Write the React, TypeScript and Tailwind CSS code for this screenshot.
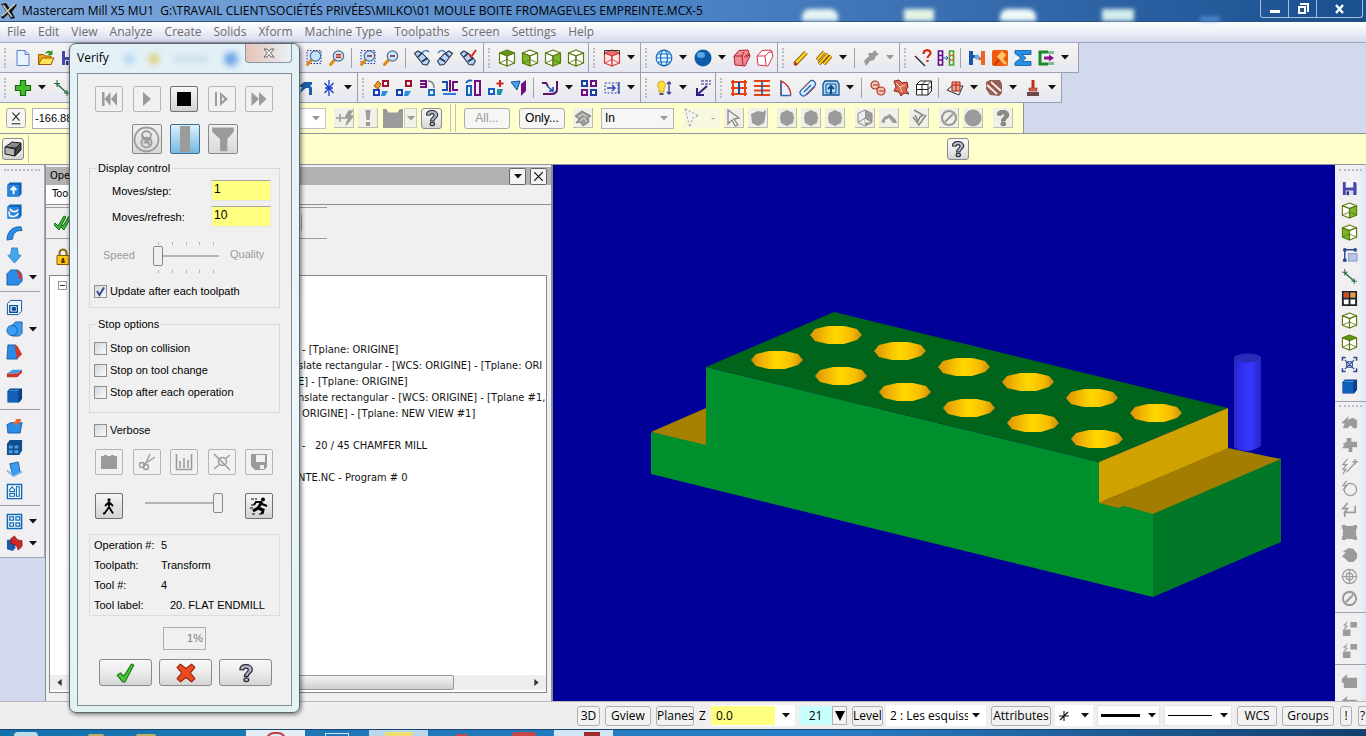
import React from "react";

type IconProps = { k: string; s?: number };

const G = "#9b9b9b";
const cube = (top: string, left: string, right: string, c: string) => (
  <g stroke={c} strokeWidth="1.2" strokeLinejoin="round">
    <path d="M9 1 16.500 4 9 7 1.500 4Z" fill={top} />
    <path d="M1.500 4 9 7V17L1.500 14Z" fill={left} />
    <path d="M16.500 4 9 7V17L16.500 14Z" fill={right} />
    <path d="M1.500 14 9 10.500 16.500 14M9 7v4" fill="none" strokeWidth=".9" />
  </g>
);
const lens = (inner: React.ReactNode, box?: boolean) => (
  <g>
    {box && <rect x="2" y="1.5" width="14" height="13" fill="#dbe8fb" stroke="#3030a0" strokeDasharray="1.5 1.5" />}
    <path d="M6.500 11 2.500 15.500" stroke="#e08a10" strokeWidth="3" strokeLinecap="round" />
    <circle cx="10.5" cy="7" r="5.2" fill="#bfe4fb" stroke="#5a6a8c" strokeWidth="1.2" />
    {inner}
  </g>
);
const blueBox = (
  <g>
    <path d="M1.500 4 4 1.500h12.500v12L14 16.500H1.500Z" fill="#0b62b8" />
    <path d="M1.500 4H14v12.500H1.500Z" fill="#2a86dc" />
  </g>
);
const rod = (a: React.ReactNode) => (
  <g>
    <path d="M1.500 4.500 5 2l5 3 6.500 7-2.500 4-4-.5Z" fill="#b9d4ee" stroke="#1f2f55" strokeWidth="1.1" strokeLinejoin="round" />
    <path d="m5 8 4-4M9 12.500 14.500 9" stroke="#1f2f55" strokeWidth="1.6" />
    {a}
  </g>
);
const q = (fill: string, stroke: string) => (
  <g>
    <path d="M3.5 6C3.500 2.800 6 1.500 9 1.500s5.700 1.700 5.700 4.500c0 3-3.700 3.300-3.700 6H7.500C7.500 8.500 11 8.500 11 6.200 11 5.200 10.200 4.600 9 4.600S7 5.200 7 6.300Z" fill={fill} stroke={stroke} strokeWidth="1.1" strokeLinejoin="round" />
    <ellipse cx="9.300" cy="15" rx="2.200" ry="1.700" fill={fill} stroke={stroke} strokeWidth="1.100" />
  </g>
);
const sq = (x: number, y: number, c: string, w = 5) => (
  <rect x={x} y={y} width={w} height={w} fill="#fff" stroke={c} strokeWidth="2" />
);

const ICONS: Record<string, React.ReactNode> = {
  doc: <path d="M3 1.500h8l4 4v11H3Zm8 0v4h4" fill="#e9f3ff" stroke="#5580c8" strokeLinejoin="round" />,
  folder: (
    <g>
      <path d="M1.500 15.500v-10h5l1.500 1.500h6v8.500Z" fill="#f2a516" stroke="#9a5c00" />
      <path d="M1.500 15.500 5 9h12l-3 6.500Z" fill="#ffe25a" stroke="#9a5c00" />
      <path d="M8 5c1-3 4-4 6-2.500l1.500-1.500v5h-5l2-1.500C11 3.500 9.500 4 8 5Z" fill="#2f9c1f" />
    </g>
  ),
  save: (
    <g>
      <path d="M2 2h13l1.500 1.500V16H2Z" fill="#4848a8" />
      <path d="M5 2h8v6H5Z" fill="#f2f4ff" />
      <path d="M5 11h8v5H5Z" fill="#d5daf5" />
      <path d="M6 12h2.500v4H6Z" fill="#30307a" />
    </g>
  ),
  zoomBox: lens(null, true),
  zoomEq: lens(<path d="M8 5.800h5M8 8.300h5" stroke="#d02a10" strokeWidth="1.600" />),
  zoomMinusBox: lens(<path d="M8 7h5" stroke="#a02040" strokeWidth="1.600" />, true),
  zoomMinus: lens(<path d="M8 7h5" stroke="#a02040" strokeWidth="1.600" />),
  rodA: rod(<path d="M9 4c2-3 5-3 7-1" stroke="#3579c8" strokeWidth="1.500" fill="none" />),
  rodB: <g transform="matrix(-1 0 0 1 18 0)">{rod(<path d="M9 3c2-2 5-2 7 1" stroke="#3579c8" strokeWidth="1.500" fill="none" />)}</g>,
  rodC: rod(<path d="m10 5 2 3 5-7" fill="none" stroke="#d02a20" strokeWidth="2" />),
  cubeTop: cube("#5f9c16", "#fff", "#fff", "#5c7a12"),
  cubeLeft: cube("#fff", "#79b82a", "#fff", "#5c7a12"),
  cubeRight: cube("#fff", "#fff", "#79b82a", "#5c7a12"),
  cubeWire: cube("#fff", "#fff", "#fff", "#5c7a12"),
  cubeRed: (
    <g>
      {cube("#f07070", "#ffe6e6", "#ffe6e6", "#d04040")}
      <path d="M1.500 1.500h15M1.500 1.500v4M16.500 1.500v4" stroke="#333" fill="none" />
    </g>
  ),
  globe: (
    <g fill="#e8f6ff" stroke="#1470c0" strokeWidth="1.200">
      <circle cx="9" cy="9" r="7.800" />
      <ellipse cx="9" cy="9" rx="3.500" ry="7.800" fill="none" />
      <path d="M1.500 9h15M3 5h12M3 13h12" />
    </g>
  ),
  sphere: (
    <g>
      <circle cx="9" cy="9" r="8.500" fill="#0f5ba8" />
      <ellipse cx="7" cy="6" rx="4" ry="3" fill="#5aa5e4" />
    </g>
  ),
  solidRed: (
    <g stroke="#b01c30" strokeLinejoin="round">
      <path d="M1 7 6 1.500l9-.5 2 6-5 10-10-1Z" fill="#f28c94" />
      <path d="M1 7h8l2-4M9 7l1 9M11 8l5-3M13 9l3-3" fill="none" />
    </g>
  ),
  wireRed: (
    <g stroke="#d8384c" fill="#fff" strokeLinejoin="round">
      <path d="M1 7 6 1.500l9-.5 2 6-5 10-10-1Z" />
      <path d="M1 7h8l4-4h4M9 7l1 9" fill="none" />
    </g>
  ),
  pencil: (
    <g>
      <path d="M3 15 14 3.500" stroke="#7a5200" strokeWidth="4.600" />
      <path d="M3.500 14.500 14 3.500" stroke="#ffd020" strokeWidth="2.600" />
      <circle cx="3.500" cy="15" r="1.800" fill="#c83020" />
    </g>
  ),
  pencils: (
    <g>
      <path d="m2 11 7-8M4 15l9-10M9 15l7-8" stroke="#7a5200" strokeWidth="3.500" />
      <path d="m2 11 7-8M4 15l9-10M9 15l7-8" stroke="#ffc81e" strokeWidth="2" />
    </g>
  ),
  grayPen: <path d="M2 12 7 7l-1-3h4l3-3 2 3 2 1-3 2-2 4-4 1-4 5Z" fill={G} />,
  lineQ: (
    <g>
      <path d="m1 7 10 10" stroke="#222" strokeWidth="1.300" />
      <path d="M9.500 5c0-5 7-5 7-1 0 2.500-3 2.500-3 5M13.500 11v2" fill="none" stroke="#d42a10" strokeWidth="2.200" />
    </g>
  ),
  tables: (
    <g>
      <path d="M1.500 2h4v14h-4Zm0 4.500h4m-4 4.500h4" fill="#fff" stroke="#60108a" strokeWidth="1.700" />
      <path d="M12.500 2h4v14h-4Z" fill="#fff" stroke="#48a030" strokeWidth="1.700" />
      <path d="M12.500 6.500h4m-4 4.500h4" stroke="#d86030" strokeWidth="1.500" />
      <path d="M6 9h5M9 7l2 2-2 2" stroke="#2060c0" fill="none" />
    </g>
  ),
  puzzle: (
    <g>
      <path d="M1 2h4v4h3v3H5v7H1Z" fill="#1a56a8" />
      <path d="M17 2h-4v6h-3v3h3v5h4Z" fill="#f06428" />
      <circle cx="9" cy="8" r="2.500" fill="#6aaee8" />
    </g>
  ),
  hammer: (
    <g>
      <rect x="1" y="1" width="16" height="16" rx="2" fill="#ee5a10" />
      <path d="M6 7.500 11 2l4 4-3 4 4 4-2 2-5-5Z" fill="#ffc468" />
      <path d="M2 16 7 10l2 1-4 5Z" fill="#c83808" />
    </g>
  ),
  sigma: <path d="M1 1.500h16v4H8l4 3.500-4 3.500h9v4H1v-3L7 9 1 4.500Z" fill="#2590e8" stroke="#0c5498" strokeWidth=".8" />,
  post: (
    <g>
      <path d="M11 3H3v12h8" fill="none" stroke="#1c8a28" strokeWidth="3" />
      <path d="M12 2v3m2-3v3m2-3v3m-4 8v3m2-3v3m2-3v3" stroke="#1c8a28" />
      <path d="M7 7.500h5V5.500L17 9l-5 3.500v-2H7Z" fill="#8a1090" />
    </g>
  ),
  plus: <path d="M6.500 1.500h5v5h5v5h-5v5h-5v-5h-5v-5h5Z" fill="#45bc30" stroke="#12700c" strokeWidth="1.200" />,
  line: (
    <g stroke="#1f6a3a" fill="none">
      <path d="m4 5 10 9" strokeWidth="1.400" />
      <path d="M4 1v7M1 4.500h6M14 11v6M11 14h6" />
    </g>
  ),
  wrench: <path d="M1 8 7 3h8v3h-2l2 3v7h-3v-7H9l-6 5 2-6Z" fill="#1a5fa8" />,
  star: <path d="M9 1v16M4.500 4l9 10M13.500 4l-9 10M5 9h8" stroke="#1f3fd0" strokeWidth="1.300" />,
  xf1: (
    <g>
      <path d="m2 7 4-5 3 3-3 5Z" fill="#f0a020" stroke="#a05010" />
      {sq(11, 2, "#a01030")}
      {sq(2, 11, "#1540b0")}
      <path d="M10 12h6l-3 5h-4Z" fill="#2a90e0" />
    </g>
  ),
  xf2: (
    <g>
      {sq(11, 2, "#a01030")}
      {sq(2, 11, "#1540b0")}
      <path d="M10 12h6l-3 5h-4Z" fill="#2a90e0" />
    </g>
  ),
  xf3: (
    <g>
      <path d="M2 2h6v6H2M2 5h6" fill="none" stroke="#701080" strokeWidth="2" />
      {sq(11, 11, "#2070c8")}
      <path d="M10 2c4 0 6 3 6 7" stroke="#808090" fill="none" strokeWidth="1.500" />
    </g>
  ),
  xf4: (
    <g fill="none" strokeWidth="2">
      <path d="M1 3h5v8H1" stroke="#1550b0" />
      <path d="M17 3h-5v8h5M9 1v12" stroke="#701080" />
      <path d="M2 15h13" stroke="#2080d8" />
    </g>
  ),
  xf5: (
    <g fill="none" strokeWidth="2">
      <path d="M11 2h5v14h-5Z" stroke="#701080" />
      <path d="M3 7h4v9H3ZM2 4c2-3 5-3 6-2" stroke="#1560c0" />
    </g>
  ),
  xf6: (
    <g>
      {sq(2, 10, "#1560c0")}
      <path d="M10 10h6l-2 6h-4Z" fill="#2090a8" />
      <path d="M13 1v7M9.500 4.500h7" stroke="#d02020" strokeWidth="2" />
    </g>
  ),
  xf7: (
    <g>
      <path d="m1 3 9-1-3 9Z" fill="#4aa0e8" stroke="#1550a0" />
      <path d="m11 5 5-4v11l-5 5Z" fill="#701080" />
    </g>
  ),
  fillet: (
    <g fill="none">
      <path d="M1 4h4l2 3M2 15h8c4 0 6-2 6-5V2" stroke="#601070" strokeWidth="2" />
      <path d="m6 7 6 5M12 8v4H8" stroke="#1550b0" strokeWidth="1.500" />
    </g>
  ),
  four: (
    <g>
      {sq(2, 2, "#1540a0")}
      {sq(11, 2, "#701080")}
      {sq(2, 11, "#701080")}
      {sq(11, 11, "#1540a0")}
    </g>
  ),
  stretch: (
    <g stroke="#3040b0" fill="none">
      <path d="M2 4h13v10H2Z" strokeDasharray="2 1.500" />
      <path d="M4 9h8M9 6l3 3-3 3M16 3v12" strokeWidth="1.400" />
    </g>
  ),
  bulb: (
    <g>
      <path d="M6 2a4 4 0 0 1 3 7v4H4V9a4 4 0 0 1 2-7Z" fill="#ffe040" stroke="#b89000" strokeWidth=".7" />
      <path d="M4.500 14h4v2h-4Z" fill="#555" />
      <path d="M14 3v12M12 5l2-2 2 2M12 13l2 2 2-2" stroke="#3a3a90" fill="none" strokeWidth="1.300" />
    </g>
  ),
  diag: (
    <g stroke="#302080" fill="none">
      <path d="M7 2h10M7 5h10" strokeDasharray="3 1" />
      <path d="M13 7 4 15M3 9v7h7" strokeWidth="2" />
    </g>
  ),
  gridRed: (
    <g fill="none">
      <path d="M1 3h16M1 15h16M1 9h16" stroke="#e84010" strokeWidth="2" />
      <path d="M3 1v16M15 1v16" stroke="#e84010" strokeWidth="2" />
      <path d="M9 3v12" stroke="#1550a0" strokeWidth="2" />
    </g>
  ),
  linesRed: (
    <g>
      <path d="M1 2h16M1 7h16M1 11.500h16M1 16h16" stroke="#e84010" strokeWidth="2" />
      <path d="M9 2v14" stroke="#1550a0" strokeWidth="1.500" />
    </g>
  ),
  arc: (
    <g>
      <path d="M5 16V2c5 2 9 7 10 14" fill="#e8f2ff" stroke="#c83820" strokeWidth="1.400" />
      <path d="M5 2v14.500h10" fill="none" stroke="#3468a8" strokeWidth="1.500" />
    </g>
  ),
  pipe: (
    <g>
      <path d="M4.500 13.500 13 5" stroke="#1f60b0" strokeWidth="8" strokeLinecap="round" />
      <path d="M4.500 13.500 13 5" stroke="#d6eafc" strokeWidth="5.500" strokeLinecap="round" />
      <path d="M3 10 11 2M8 16l8-8" stroke="#d04020" />
      <path d="m5 13 7-7" stroke="#1f60b0" strokeWidth="1.300" />
    </g>
  ),
  boxUp: (
    <g>
      <path d="M3 2h12l2 3v11H1V5Z" fill="#bcdcf6" stroke="#0f4f90" strokeWidth="1.300" />
      <path d="M4 5h10v9H4Z" fill="none" stroke="#0f4f90" />
      <path d="M9 15V7M6 10l3-3 3 3" stroke="#0f4f90" strokeWidth="2" fill="none" />
    </g>
  ),
  swirl: (
    <g fill="#f0c4b8" stroke="#b03018" strokeWidth="1.200">
      <circle cx="6" cy="6" r="4" />
      <circle cx="12" cy="12" r="4" />
      <path d="M4 6h5M10 12h5" />
    </g>
  ),
  burst: (
    <g>
      <path d="M2 2 7 1l3 3 5-1 1 5-2 3 3 4-5-1-3 3-2-4-5-1 2-4Z" fill="#d86850" stroke="#8a2818" />
      <path d="m4 4 4 4 5-2M8 8l2 5" fill="none" stroke="#f4d0c4" />
    </g>
  ),
  grid3d: <path d="M1.500 5.500 5 2h11.500v10L13 16H1.500Zm0 0H13V16M13 5.500 16.500 2M7 5.500V16M1.500 10.500H13l3.500-3.500M7 5.500 10.500 2" fill="#fff" stroke="#222" />,
  net1: (
    <g>
      <path d="m1 11 5-4h11l-4 9Z" fill="#eee" stroke="#333" />
      <path d="M6 3h8v9H6Zm0 3h8M10 3v9" fill="#f0a090" stroke="#b02010" />
    </g>
  ),
  net2: (
    <g>
      <path d="M1 3 5 1h10l2 4v9l-3 3-9-1-4-6Z" fill="#906058" />
      <path d="m2 6 10 9M6 3l10 9" stroke="#f4ece8" strokeWidth="2" />
      <path d="m4 3 12 12" stroke="#c03828" />
    </g>
  ),
  mill: (
    <g>
      <path d="M7.500 1h3v8h-3Z" fill="#c03020" />
      <path d="M5 9h8v3H5Z" fill="#e06050" stroke="#8a2818" strokeWidth=".6" />
      <path d="M3 13h12v4H3Z" fill="#6a4a4a" />
    </g>
  ),
  grid4: (
    <g>
      <path d="M2 2h14v14H2Z" fill="#fff" stroke="#222" strokeWidth="2" />
      <path d="M3 3h5v5H3Z" fill="#e04810" />
      <path d="M10 3h5v5h-5Z" fill="#f2a030" />
      <path d="M9 2v14M2 9h14" stroke="#222" strokeWidth="2" />
    </g>
  ),
  bUp: (
    <g>
      {blueBox}
      <path d="M8 14V7M5 9.500l3-3 3 3" stroke="#fff" strokeWidth="2" fill="none" />
    </g>
  ),
  bRev: (
    <g>
      {blueBox}
      <path d="M4 6c2 4 7 4 9 1M3 13c3 2 8 2 10-2M3 9l1 4" stroke="#fff" strokeWidth="1.700" fill="none" />
    </g>
  ),
  bSweep: <path d="M1 16C1 7 7 1 16 2l1 4C11 5 7 9 7 15Z" fill="#2a8ce6" stroke="#0b4f96" strokeWidth=".8" />,
  bLoft: <path d="M6 1h6l1 7 3 1-7 8-7-8 3-1Z" fill="#45a6f0" stroke="#2a78c0" strokeWidth=".8" />,
  bFillet: (
    <g>
      <path d="M1 5 5 1h7c3 1 5 4 5 7v5l-4 4H1Z" fill="#2a8ce6" stroke="#0b4f96" strokeWidth=".8" />
      <path d="M10 1c4 1 7 4 7 9l-3 1c0-4-1-7-4-10Z" fill="#e03020" />
    </g>
  ),
  bShell: (
    <g stroke="#0b4f96">
      <path d="M1.500 5 5 1.500h11.500V13L13 16.500H1.500Z" fill="#eaf5ff" />
      <path d="M4 7h8v7H4Z" fill="#fff" strokeWidth="1.500" />
      <path d="M6.500 9h3.500v3H6.500Z" fill="#0b4f96" />
    </g>
  ),
  bBool: (
    <g fill="#3a9df0" stroke="#0b4f96" strokeWidth=".8">
      <path d="M7 4 10 1h7v12l-3 3H7Z" />
      <circle cx="6.500" cy="10" r="5.500" />
    </g>
  ),
  bDraft: (
    <g>
      <path d="M2 2h8l2 15H1Z" fill="#2a8ce6" stroke="#0b4f96" strokeWidth=".8" />
      <path d="m9 2 3 1 5 9-5 5Z" fill="#d83828" />
    </g>
  ),
  bTrim: (
    <g>
      <path d="m1 9 6-4h10l-5 4Z" fill="#3a9df0" />
      <path d="M1 9h11l5-4v3l-5 5H1Z" fill="#c83828" />
    </g>
  ),
  bCube: (
    <g>
      <path d="M1.500 4.500 4 1.500h13v11l-3 4H1.500Z" fill="#0a3f86" />
      <path d="M2 5h11v11H2Z" fill="#1060bc" />
      <path d="M4 3h10l-1 1.500H3Z" fill="#3a90e0" />
    </g>
  ),
  bOpen: (
    <g>
      <path d="M1 8 5 6h12l-2 11H2Z" fill="#2a8ce6" stroke="#0b4f96" strokeWidth=".8" />
      <path d="m8 7 3-4-2-1h7l-1 5-2-1-2 3Z" fill="#e86a28" />
    </g>
  ),
  bGrid: (
    <g>
      <path d="M1 5 4 1h13v11l-3 5H1Z" fill="#124e8c" />
      <path d="M3 7h4v3H3Zm6 0h4v3H9Zm-6 5h4v3H3Zm6 0h4v3H9Z" fill="#4aa0e8" />
    </g>
  ),
  bFace: (
    <g>
      <path d="m4 3 9-2 2 11-8 3Z" fill="#3a9df0" stroke="#0b4f96" strokeWidth=".8" />
      <path d="m1 10 7 6 9-5" fill="none" stroke="#78b4e4" strokeWidth="1.800" />
    </g>
  ),
  bPlan: (
    <g fill="#fff" stroke="#0f68b8" strokeWidth="1.500">
      <path d="M1.500 1.500h15v15h-15Z" />
      <path d="M4 7l2.500-3L9 7v2H4ZM11 4h3v10h-3ZM4 11h5v3H4Z" strokeWidth="1.200" />
    </g>
  ),
  bFour: (
    <g fill="#fff" stroke="#0f68b8" strokeWidth="1.600">
      <path d="M1.500 1.500h15v15h-15Z" />
      <path d="M4 4h4v3.500H4Zm6.500 0h4v3.500h-4ZM4 10.500h4V14H4Zm6.500 0h4V14h-4Z" strokeWidth="1.300" />
    </g>
  ),
  bRed: (
    <g>
      <path d="M1 5h9v9l-3 3-6-2Z" fill="#1b5cae" />
      <path d="m5 4 4-3 3 4 5 1v6l-4 4-2-5-6-2Z" fill="#d02828" stroke="#701010" strokeWidth=".7" />
    </g>
  ),
  cap: (
    <g>
      <path d="M4 4v11M4 4h12" stroke="#2a4a90" strokeWidth="1.500" />
      <circle cx="4" cy="4" r="2" fill="#2a4a90" />
      <circle cx="15" cy="4" r="2" fill="#2a4a90" />
      <circle cx="4" cy="15" r="2" fill="#2a4a90" />
      <path d="M8 8h9v8H8Z" fill="#b8c4e8" stroke="#8a96c8" />
    </g>
  ),
  fit: (
    <g fill="none" stroke="#2a4a90" strokeWidth="1.600">
      <path d="M1.500 5V1.500H5M13 1.500h3.500V5M1.500 13v3.500H5M13 16.500h3.500V13" />
      <path d="M6 6h6v6H6ZM4 4l10 10M14 4 4 14" strokeWidth="1.100" />
    </g>
  ),
  gSel: <path d="m1 9 7-7-1 4 6-2 4 3v8h-4l-3-3-3 3H2l2-5H1Z" fill={G} />,
  gPlus: <path d="M6 2h5v4h6v6h-5v5H8v-4H1l3-4H1l5-3Z" fill={G} />,
  gLine: <path d="M7 1 2 7h4l-4 5h3l-3 5M6 15 15 5M15 1v6M12 4h6" fill="none" stroke={G} strokeWidth="1.400" />,
  gCirc: (
    <g fill="none" stroke={G} strokeWidth="1.400">
      <circle cx="10" cy="10" r="6.500" />
      <path d="M6 1 2 6h4l-4 5" />
    </g>
  ),
  gCorner: <path d="M7 1 2 7h5l-4 5M4 16v-5h11V4" fill="none" stroke={G} strokeWidth="1.800" />,
  gSq: <path d="M1 1h4v1h8V1h4v4h-1v8h1v4h-4v-1H5v1H1v-4h1V5H1Z" fill={G} />,
  gBlob: <path d="m8 2 5 1 4 5v5l-4 4H8l-4-4-3-2 4-4-3-1Z" fill={G} />,
  gGlobe: (
    <g fill="none" stroke={G} strokeWidth="1.300">
      <circle cx="9" cy="9" r="7.500" />
      <circle cx="9" cy="9" r="3.500" />
      <path d="M1 9h16M9 1v16" />
    </g>
  ),
  gNo: (
    <g fill="none" stroke={G} strokeWidth="2.200">
      <circle cx="9" cy="9" r="7" />
      <path d="m5 13 8-8" />
    </g>
  ),
  gBoxes: <path d="M10 2h7v6h-7ZM2 10h8v7H2ZM7 1 2 6h3l-3 5 6-5H5Z" fill={G} />,
  gBlock: <path d="m1 7 6-5-1 4h11v11H3V11l-2 1Z" fill={G} />,
  gBolt: <path d="M1 9h8M5 5v8M14 2l-4 7h4l-3 7 7-9h-4l3-5Z" fill={G} stroke={G} strokeWidth="1.500" />,
  gBang: <path d="M6.500 1h5l-1 10h-3ZM7 13h4v4H7Z" fill={G} />,
  gCastle: <path d="M0 1h3l2 3h8l2-3h3v17H0Z" fill={G} />,
  gCubes: (
    <g>
      <path d="m1 7 7-5 9 5-3 2 1 4-6 4-3-4-4 1 3-4Z" fill={G} stroke="#808080" />
      <path d="m4 8 5-3 4 3M6 12l4-3 3 4" fill="none" stroke="#e4e4dc" />
    </g>
  ),
  gCursor: <path d="m3 1 11 8-5 1 4 6-3 1-3-6-4 4Z" fill="#eee" stroke="#888" strokeWidth="1.300" />,
  gDots: <path d="m2 1 12 6-5 2-3 8Z" fill="#f6f6f6" stroke="#aaa" strokeDasharray="2 1.500" />,
  gCircle: <circle cx="9" cy="9" r="8.500" fill={G} />,
  gHex: <path d="m9 1 6 3 1 5-1 5-6 3-6-3-1-5 1-5Z" fill={G} />,
  gHexMark: <path d="m9 2 5 1 3-2-1 8-1 5-6 3-6-3-1-9Z" fill={G} />,
  gCube: (
    <g stroke="#8a8a8a">
      <path d="m9 1 7 3.500v9L9 17Z" fill={G} />
      <path d="M9 1 2 4.500v9L9 17M2 13.500 9 9l7 4.500" fill="#eee" />
    </g>
  ),
  gChev: <path d="M1 13 4 8l6-3 6 6 1 3h-4L9 9l-4 2v3Z" fill={G} />,
  gCheck: <path d="m4 1 9 5-3 2-2 4-3-6M3 8l6 8 7-10" fill="none" stroke="#888" strokeWidth="1.600" />,
  gQ: q("#8d8d8d", "#7c7c7c"),
  quest: q("#b4b6c8", "#26262e"),
  darkCube: (
    <g stroke="#1a1a1a" strokeLinejoin="round">
      <path d="m1 7 7-5 9 1-5 5Z" fill="#888" />
      <path d="m1 7 10 2v7l-10-2Z" fill="#b4b4b4" />
      <path d="m11 9 6-6v7l-6 6Z" fill="#444" />
    </g>
  ),
  axisX: <path d="m5 3 8 9M13 3l-8 9M4 15.500h10" stroke="#222" strokeWidth="1.200" />,
  checks: (
    <g fill="#3cb83a" stroke="#157015">
      <path d="m6 9 3 3 6-10 2 1-7 13-5-5Z" />
      <path d="m1 9 3 3 6-10 2 1-7 13-5-5Z" />
    </g>
  ),
  lock: (
    <g>
      <path d="M5.500 8V5a3.500 3.500 0 0 1 7 0v3" fill="none" stroke="#8a6a10" strokeWidth="2" />
      <path d="M3 7.500h12v9H3Z" fill="#ffc818" stroke="#8a5c00" />
      <path d="M8 10h2l1 5H7Z" fill="#5a3a00" />
    </g>
  ),
  first: <path d="M2 2h2.500v14H2ZM10.500 2v14L4.500 9ZM17 2v14L11 9Z" fill={G} />,
  play: <path d="M5 2v14l8-7Z" fill={G} />,
  stop: <path d="M2 2h14v14H2Z" fill="#000" />,
  step: <path d="M2 2h2v14H2ZM7 2v14l8-7Zm2 4.500L11.500 9 9 11.500Z" fill={G} fillRule="evenodd" />,
  ffwd: <path d="M1.500 2v14L9 9ZM9 2v14l7.500-7Z" fill={G} />,
  coil: (
    <g fill="none" stroke={G} strokeWidth="1.200">
      <circle cx="9" cy="9" r="8" />
      <ellipse cx="9" cy="6" rx="3" ry="2.500" />
      <ellipse cx="9" cy="11" rx="3.400" ry="3.200" />
      <path d="M6 7c1 3 5 3 6 1M7 11h4M6 6c2 4 4 4 5 7" />
    </g>
  ),
  bar: <path d="M5.500 0h7v18h-7Z" fill={G} />,
  funnel: <path d="M1.500 1h15v3l-4.500 5v8.500H7V9L1.500 4Z" fill={G} />,
  camera: <path d="M1 3h3V2h3v1h4V2h3v1h3v13H1Z" fill={G} />,
  cut: (
    <g fill="none" stroke={G} strokeWidth="1.400">
      <path d="M17 4 5 12M12 1 7 12" />
      <circle cx="4" cy="12" r="2.500" />
      <circle cx="8" cy="14" r="2.500" />
    </g>
  ),
  ruler: <path d="M1.500 1v15.500h15V1M5 15V8M9 15V5M13 15V7" fill="none" stroke={G} strokeWidth="1.600" />,
  measure: (
    <g fill="none" stroke={G} strokeWidth="1.500">
      <circle cx="9.500" cy="8.500" r="4" />
      <path d="M1 1l12 12 4 4M17 2l-5 4M1 16l6-5" />
    </g>
  ),
  gDisk: (
    <g>
      <path d="M1 1h16v13l-3 3H5l-4-4Z" fill={G} />
      <path d="M6 2h9v7H6Zm4 10h4v4h-4Z" fill="#f1f1f1" />
    </g>
  ),
  walk: (
    <g fill="none" stroke="#000" strokeWidth="1.800">
      <circle cx="9" cy="2.800" r="1.600" fill="#000" stroke="none" />
      <path d="M9 4.500v6M5 9l4-4 4 4M4.500 16.500 9 10l4 6.500M3 16.500h2" />
    </g>
  ),
  run: (
    <g fill="none" stroke="#000">
      <circle cx="13" cy="2.500" r="2" fill="#000" stroke="none" />
      <path d="m12 5-4 6 5 2-1 4M8 11l-5 3" strokeWidth="3" />
      <path d="m12 5-6 0-2 3M12 7l5 2" strokeWidth="2" />
      <path d="M1 2h6M0 11h4M2 17h4M9 17h3M1 8h3" strokeDasharray="3 1" />
    </g>
  ),
  ok: <path d="m1 11 3-2 3 3 7-11 2 1L8 17H6Z" fill="#45c83a" stroke="#1f7a18" strokeLinejoin="round" />,
  no: <path d="m1 4 3-3 5 4 5-4 3 3-4 5 4 5-3 3-5-4-5 4-3-3 4-5Z" fill="#ea4a20" stroke="#98200a" strokeLinejoin="round" />,
};

const Icon = ({ k, s = 18 }: IconProps) => (
  <svg viewBox="0 0 18 18" width={s} height={s} aria-hidden="true" className="shrink-0">
    {ICONS[k]}
  </svg>
);

const Tri = ({ gray }: { gray?: boolean }) => (
  <svg viewBox="0 0 8 5" width="8" height="5" aria-hidden="true" className="shrink-0">
    <path d="M0 0h8L4 4.500Z" fill={gray ? "#999" : "#111"} />
  </svg>
);

/* Toolbar items: an icon name, "v" for a drop-down arrow, "V" for a disabled one, "|" for a divider. */
const Items = ({ list }: { list: string }) => (
  <>
    {list.split(" ").map((t, i) =>
      t === "v" || t === "V" ? (
        <button key={i} aria-label="More" className="flex h-6 w-4 items-center justify-center">
          <Tri gray={t === "V"} />
        </button>
      ) : t === "|" ? (
        <span key={i} className="mx-[3px] h-5 w-[2px] border-l border-[#a0a0a8]" />
      ) : (
        <button key={i} aria-label={t} className="flex h-6 w-[23px] shrink-0 items-center justify-center">
          <Icon k={t} />
        </button>
      )
    )}
  </>
);

const Bar = ({ children }: { children: React.ReactNode }) => (
  <div className="flex h-full shrink-0 items-center border-r border-b border-[#9aa0b4] bg-gradient-to-b from-[#f4f4f6] via-[#efefef] to-[#e6e8f2] pr-px">
    <span className="mr-[5px] ml-1 h-5 w-0.5 border-l-2 border-dotted border-[#b8bccb]" />
    {children}
  </div>
);

const VItems = ({ list }: { list: string }) => (
  <>
    {list.split(" ").map((t, i) =>
      t === "|" ? (
        <span key={i} className="my-[3px] h-[2px] w-10 max-w-full border-t border-[#a0a0a8]" />
      ) : (
        <div key={i} className="flex h-[22px] items-center pl-[5px]">
          <button aria-label={t.replace("+", "")} className="flex w-[18px] justify-center">
            <Icon k={t.replace("+", "")} s={17} />
          </button>
          {t.endsWith("+") && (
            <button aria-label="More" className="ml-[6px]">
              <Tri />
            </button>
          )}
        </div>
      )
    )}
  </>
);

const Sel = ({ k }: { k: string }) => (
  <button aria-label={k} className="flex size-5 shrink-0 items-center justify-center border-r border-b border-[#bdbdb0] bg-[#f0f0e8]">
    <Icon k={k} />
  </button>
);

const raised = "rounded-[3px] border border-[#8a8a8a] bg-gradient-to-b from-[#f8f8f8] via-[#ececec] to-[#d4d4d4]";
const flat = "rounded-[3px] border border-[#acacac] bg-[#f6f6f4]";

const DlgBtn = ({ k, on }: { k: string; on?: boolean }) => (
  <button
    aria-label={k}
    className={
      on
        ? "flex h-[26px] w-7 items-center justify-center rounded-[2px] border border-[#707070] bg-gradient-to-b from-[#f6f6f6] to-[#d2d2d2]"
        : "flex h-[26px] w-7 items-center justify-center rounded-[2px] border border-[#b4b4b4] bg-[#f1f1f1]"
    }
  >
    <Icon k={k} />
  </button>
);

const Check = ({ label, checked }: { label: string; checked?: boolean }) => (
  <label className="flex h-4 items-center gap-[3px]">
    <span className="grid size-[13px]">
      <input type="checkbox" defaultChecked={checked} className="peer col-start-1 row-start-1 size-[13px] appearance-none border border-[#8e8f8f] bg-gradient-to-br from-[#d4d6d8] to-[#fafafa]" />
      <svg viewBox="0 0 13 13" className="pointer-events-none invisible col-start-1 row-start-1 size-[13px] peer-checked:visible">
        <path d="m3 6 2.500 4L10 2.500" fill="none" stroke="#3a4a94" strokeWidth="2" />
      </svg>
    </span>
    {label}
  </label>
);

const thumb =
  "h-5 appearance-none bg-transparent [&::-webkit-slider-runnable-track]:h-[2px] [&::-webkit-slider-runnable-track]:bg-[#b4b4b4] [&::-webkit-slider-thumb]:-mt-[9px] [&::-webkit-slider-thumb]:h-5 [&::-webkit-slider-thumb]:w-[10px] [&::-webkit-slider-thumb]:appearance-none [&::-webkit-slider-thumb]:rounded-[2px] [&::-webkit-slider-thumb]:border [&::-webkit-slider-thumb]:border-[#8a8a8a] [&::-webkit-slider-thumb]:bg-[#f0f0f0]";

const Verify = () => (
  <section
    aria-label="Verify"
    className="absolute top-[43px] left-[69px] w-[231px] rounded-[7px] border border-[#5b6670] bg-gradient-to-b from-[#e3f1f7] via-[#eef6fa] to-[#e2f3f4] px-[7px] pb-[6px] font-['Liberation_Sans',Arial,sans-serif] text-[11px] text-black shadow-[1px_1px_5px_rgba(0,0,0,0.6)]"
  >
    <header className="flex h-[29px] items-start justify-between">
      <h2 className="pt-[6px] font-['Open_Sans','Noto_Sans',sans-serif] text-[12px] leading-4">Verify</h2>
      <div className="flex flex-1 items-center justify-around pt-2 pl-2 blur-[3px]">
        <span className="size-2.5 rounded-full bg-[#a8d2f0]" />
        <span className="size-2.5 rounded-full bg-[#dccb60]" />
        <span className="h-2 w-9 rounded-full bg-[#cfe0ee]" />
        <span className="size-3.5 rounded-full bg-[#6aa2e6]" />
      </div>
      <button aria-label="Close" className="flex h-[19px] w-[47px] items-center justify-center rounded-b-[4px] border border-t-0 border-[#8a98a4] bg-gradient-to-r from-[#e6c4b8] to-[#e9f1f5]">
        <svg viewBox="0 0 12 10" width="12" height="10">
          <path d="M1 1h3l2 2.500L8 1h3L7.500 5 11 9H8L6 6.500 4 9H1l3.500-4Z" fill="#fff" stroke="#555" strokeWidth=".9" />
        </svg>
      </button>
    </header>
    <div className="flex flex-col border border-[#7d8b91] bg-[#f0f0f0] px-[11px] pt-3 pb-[19px]">
      <div className="flex justify-between px-[6px] pr-[7px]">
        <DlgBtn k="first" />
        <DlgBtn k="play" />
        <DlgBtn k="stop" on />
        <DlgBtn k="step" />
        <DlgBtn k="ffwd" />
      </div>
      <div className="mt-3 flex justify-center gap-2">
        <button aria-label="Simulate tool" className="flex size-[30px] items-center justify-center rounded-[2px] border border-[#888] bg-gradient-to-b from-[#f2f2f2] to-[#d8d8d8]">
          <Icon k="coil" s={27} />
        </button>
        <button aria-label="Simulate holder" className="flex size-[30px] items-center justify-center rounded-[2px] border border-[#3c6f94] bg-gradient-to-b from-[#dcf1fb] to-[#74b8e0]">
          <Icon k="bar" s={26} />
        </button>
        <button aria-label="Simulate both" className="flex size-[30px] items-center justify-center rounded-[2px] border border-[#888] bg-gradient-to-b from-[#f2f2f2] to-[#d8d8d8]">
          <Icon k="funnel" s={26} />
        </button>
      </div>
      <fieldset className="mt-[6px] border border-[#d8d8d8] px-1 pb-2">
        <legend className="ml-0.5 px-[2px] leading-4">Display control</legend>
        <div className="grid grid-cols-[1fr_60px] gap-y-[5px] pt-1 pr-1 pl-[18px]">
          <label htmlFor="ms" className="pt-[3px] leading-4">Moves/step:</label>
          <input id="ms" defaultValue="1" className="h-[21px] w-full border border-[#e8e8e0] border-t-[#a8a8a8] bg-[#ffff80] px-[2px] pb-1 text-[12px]" />
          <label htmlFor="mr" className="pt-[3px] leading-4">Moves/refresh:</label>
          <input id="mr" defaultValue="10" className="h-[21px] w-full border border-[#e8e8e0] border-t-[#a8a8a8] bg-[#ffff80] px-[2px] pb-1 text-[12px]" />
        </div>
        <div className="mt-[15px] flex items-center pl-[9px] text-[#9a9a9a]">
          <label htmlFor="quality" className="w-[50px] pb-[5px]">Speed</label>
          <div className="w-[66px]">
            <div className="flex h-1 justify-between px-[5px]">
              {[0, 1, 2, 3, 4].map((i) => <span key={i} className="h-[3px] w-px bg-[#b4b4b4]" />)}
            </div>
            <input id="quality" type="range" min="0" max="4" defaultValue="0" disabled className={"block w-full " + thumb} />
            <div className="mt-1 flex h-1 justify-between px-[5px]">
              {[0, 1, 2, 3, 4].map((i) => <span key={i} className="h-[3px] w-px bg-[#b4b4b4]" />)}
            </div>
          </div>
          <span className="pb-2 pl-[11px]">Quality</span>
        </div>
        <div className="mt-[9px]">
          <Check label="Update after each toolpath" checked />
        </div>
      </fieldset>
      <fieldset className="mt-2 border border-[#d8d8d8] px-1 pb-3">
        <legend className="ml-0.5 px-[2px] leading-4">Stop options</legend>
        <div className="flex flex-col gap-[6px] pt-2">
          <Check label="Stop on collision" />
          <Check label="Stop on tool change" />
          <Check label="Stop after each operation" />
        </div>
      </fieldset>
      <div className="mt-[9px] pl-[5px]">
        <Check label="Verbose" />
      </div>
      <div className="mt-[11px] flex justify-between px-[6px] pr-[7px]">
        <DlgBtn k="camera" />
        <DlgBtn k="cut" />
        <DlgBtn k="ruler" />
        <DlgBtn k="measure" />
        <DlgBtn k="gDisk" />
      </div>
      <div className="mt-[18px] flex items-center justify-between px-[6px] pr-[7px]">
        <DlgBtn k="walk" on />
        <input aria-label="Verify speed" type="range" defaultValue="100" className={"mb-[6px] w-[78px] " + thumb} />
        <DlgBtn k="run" on />
      </div>
      <dl className="mt-[15px] grid grid-cols-[67px_1fr] gap-y-[4px] border border-[#dcdcdc] py-[2px] pl-1 leading-4">
        <dt>Operation #:</dt>
        <dd>5</dd>
        <dt>Toolpath:</dt>
        <dd>Transform</dd>
        <dt>Tool #:</dt>
        <dd>4</dd>
        <dt>Tool label:</dt>
        <dd className="pl-[9px] whitespace-nowrap">20. FLAT ENDMILL</dd>
      </dl>
      <output className="mt-[11px] h-[23px] w-[43px] self-center border border-[#acacac] pr-[2px] text-right leading-5 text-[#7a7a7a]">1%</output>
      <div className="mt-[9px] flex gap-[7px] pl-[10px]">
        <button aria-label="OK" className={"flex h-[27px] w-[53px] items-center justify-center " + raised}>
          <Icon k="ok" s={20} />
        </button>
        <button aria-label="Cancel" className={"flex h-[27px] w-[53px] items-center justify-center " + raised}>
          <Icon k="no" s={20} />
        </button>
        <button aria-label="Help" className={"flex h-[27px] w-[53px] items-center justify-center " + raised}>
          <Icon k="quest" s={20} />
        </button>
      </div>
    </div>
  </section>
);

const HOLES = [
  [836, 335], [900, 351], [964, 367], [1028, 382], [1092, 398], [1156, 413],
  [777, 360], [841, 376], [905, 392], [969, 408], [1033, 423], [1097, 439],
];

const Scene = () => (
  <svg viewBox="553 165 782 536" className="h-full w-full" role="img" aria-label="Machined part">
    <defs>
      <linearGradient id="hole">
        <stop offset="0" stopColor="#d8900c" />
        <stop offset=".25" stopColor="#f4b800" />
        <stop offset=".5" stopColor="#ffd800" />
        <stop offset=".8" stopColor="#f6bc00" />
        <stop offset="1" stopColor="#c88a10" />
      </linearGradient>
      <linearGradient id="tool">
        <stop offset="0" stopColor="#2626c8" />
        <stop offset=".3" stopColor="#3030f4" />
        <stop offset=".65" stopColor="#3838ff" />
        <stop offset="1" stopColor="#2424c4" />
      </linearGradient>
    </defs>
    <path d="M1234 358h27v88q-13 9-27 2Z" fill="url(#tool)" />
    <ellipse cx="1247.500" cy="358" rx="13.500" ry="4.500" fill="#2a2ab8" />
    <path d="M651 432 706 408V446Z" fill="#a58000" />
    <path d="M651 432 706 445V367L1099 462V500L1153 508V597L651 474Z" fill="#008f2d" />
    <path d="M706 367 834 312 1228 408 1099 462Z" fill="#00641a" />
    <path d="M1153 513 1281 458V542L1153 597Z" fill="#007828" />
    <path d="M1099 462 1228 408V449L1099 503Z" fill="#cfa200" />
    <path d="M1099 503 1228 448 1281 459 1153 514 1124 506 1118 508Z" fill="#a27d00" />
    {HOLES.map(([x, y]) => (
      <path key={x} transform={`translate(${x} ${y})`} d="M-26 0-21-6-8-9H8L21-6 26 0 21 5 8 9H-8L-21 6Z" fill="url(#hole)" />
    ))}
  </svg>
);

const MENU = ["File", "Edit", "View", "Analyze", "Create", "Solids", "Xform", "Machine Type", "Toolpaths", "Screen", "Settings", "Help"];

const TREE: [string, string][] = [
  ["pl-[252px]", "- [Tplane: ORIGINE]"],
  ["pl-[248px]", "slate rectangular - [WCS: ORIGINE] - [Tplane: ORI"],
  ["pl-[248px]", "E] - [Tplane: ORIGINE]"],
  ["pl-[248px]", "nslate rectangular - [WCS: ORIGINE] - [Tplane #1,"],
  ["pl-[252px]", "ORIGINE] - [Tplane: NEW VIEW #1]"],
  ["mt-4 pl-[252px]", "-   20 / 45 CHAMFER MILL"],
  ["mt-4 pl-[248px]", "NTE.NC - Program # 0"],
];

const Manager = () => (
  <aside className="flex w-[508px] shrink-0 flex-col border-r-2 border-l border-[#8a8c98] bg-[#f0f0f0] pt-0.5 font-['DejaVu_Sans_Condensed','Noto_Sans',sans-serif] text-[11px]">
    <header className="flex h-[18px] items-center bg-[#b2b2b2] pr-1 pl-1">
      <h2 className="flex-1">Oper</h2>
      <button aria-label="Panel menu" className="mr-1 flex size-[17px] items-center justify-center rounded-[2px] border border-[#666] bg-[#f4f4f4]">
        <Tri />
      </button>
      <button aria-label="Close panel" className="flex size-[17px] items-center justify-center rounded-[2px] border border-[#666] bg-[#f4f4f4]">
        <svg viewBox="0 0 9 9" width="9" height="9"><path d="m0 0 9 9M9 0 0 9" stroke="#111" strokeWidth="1.200" /></svg>
      </button>
    </header>
    <div className="flex h-5 border-b border-[#8c8c94]">
      <button className="bg-white pr-16 pl-[6px]">Tool</button>
    </div>
    <div className="mt-[2px] flex h-8 w-[281px] items-center border-y border-[#9c9c9c] pl-2">
      <button aria-label="Select all"><Icon k="checks" /></button>
      <span className="mr-[25px] ml-auto h-4 border-r border-[#aaa]" />
    </div>
    <div className="flex h-[36px] items-center pl-2">
      <button aria-label="Lock"><Icon k="lock" /></button>
    </div>
    <div className="mr-1 mb-2 ml-[3px] flex flex-1 flex-col overflow-hidden border border-[#85868e] bg-white">
      <div className="flex-1">
        <div className="flex h-[66px] pt-[5px] pl-2">
          <button aria-label="Collapse" className="flex size-[9px] items-center justify-center border border-[#999] bg-white">
            <span className="h-px w-[5px] bg-[#333]" />
          </button>
        </div>
        <ul>
          {TREE.map(([c, t]) => (
            <li key={t} className={"h-4 leading-4 whitespace-pre text-[#111] " + c}>{t}</li>
          ))}
        </ul>
      </div>
      <div className="mb-0.5 flex h-[15px] items-center bg-[#eee] px-[7px]">
        <svg viewBox="0 0 5 8" width="5" height="7"><path d="M5 0v8L0 4Z" fill="#333" /></svg>
        <div className="mx-1 flex h-full flex-1">
          <div className="ml-[182px] w-[206px] rounded-[2px] border border-[#999] bg-gradient-to-b from-[#f4f4f4] to-[#cfcfcf]" />
        </div>
        <svg viewBox="0 0 5 8" width="5" height="7"><path d="M0 0v8l5-4Z" fill="#333" /></svg>
      </div>
    </div>
  </aside>
);

const sbtn = "h-5 shrink-0 rounded-[3px] border border-[#b0b0b0] bg-[#f2f2f2] text-center whitespace-nowrap";

const LinePick = ({ label, w, h }: { label: string; w: string; h: string }) => (
  <button aria-label={label} className={"flex h-[21px] shrink-0 items-center justify-between border border-[#e4e4e4] bg-white px-[3px] " + w}>
    <span className={"mr-2 flex-1 bg-black " + h} />
    <Tri />
  </button>
);

export default function App() {
  return (
    <div className="relative flex h-screen flex-col overflow-hidden bg-[#d3d9ed] font-['Open_Sans','Noto_Sans',sans-serif] text-[12px] text-black">
      <header className="flex h-[21px] shrink-0 items-center bg-gradient-to-r from-[#7fa9dc] via-[#5289cb] via-45% to-[#184f8f] pr-[3px]">
        <svg viewBox="0 0 18 18" width="18" height="18" className="mr-1 shrink-0">
          <path d="M1 2 6 1l4 6 5-5 2 1-5 7 3 6-4 1-3-5-5 5-2-2 5-6Z" fill="#161616" />
          <path d="m3 3 9 12M15 2 2 14" stroke="#d0d0b8" strokeWidth="1.500" />
        </svg>
        <h1 className="whitespace-pre">Mastercam Mill X5 MU1  G:\TRAVAIL CLIENT\SOCIÉTÉS PRIVÉES\MILKO\01 MOULE BOITE FROMAGE\LES EMPREINTE.MCX-5</h1>
        <div className="flex h-full flex-1 items-end justify-end gap-[66px] overflow-hidden pr-10 blur-[2px]">
          <span className="h-3 w-9 rounded-t-lg bg-[#e4f4f4]" />
          <span className="h-3 w-[30px] bg-[#e4f4e4]" />
          <span className="h-3 w-9 rounded-t-lg bg-[#f0fafa]" />
          <span className="h-3 w-8 bg-[#d4ecec]" />
          <span className="h-1 w-5 bg-[#5b95d6]" />
        </div>
        <div className="flex h-[18px] self-start rounded-b-[3px] border border-t-0 border-[#a6bfdb] text-white">
          <button aria-label="Minimize" className="flex w-7 items-center justify-center border-r border-[#a6bfdb]">
            <svg viewBox="0 0 12 12" width="12" height="12"><path d="M1 7h10v3H1Z" fill="#fff" /></svg>
          </button>
          <button aria-label="Restore" className="flex w-7 items-center justify-center border-r border-[#a6bfdb]">
            <svg viewBox="0 0 12 12" width="12" height="12"><path d="M4 2V1h7v7h-1M2 4h6v6H2Z" fill="none" stroke="#fff" strokeWidth="2" /></svg>
          </button>
          <button aria-label="Close window" className="flex w-[45px] items-center justify-center">
            <svg viewBox="0 0 12 12" width="12" height="12"><path d="m2 2 7 8M9 2l-7 8" stroke="#fff" strokeWidth="2.400" /></svg>
          </button>
        </div>
      </header>
      <nav className="flex h-[22px] shrink-0 items-center gap-3 border-t border-b border-t-[#284f80] border-b-[#a3a9bb] bg-gradient-to-b from-white via-[#eceff8] to-[#d5dbee] pl-[7px] text-[#6b6b70]">
        {MENU.map((m) => (
          <button key={m} className="whitespace-nowrap">{m}</button>
        ))}
      </nav>
      <div className="flex h-[30px] shrink-0">
        <div className="w-[484px] shrink-0 [&>div]:w-full">
          <Bar>
            <Items list="doc folder save" />
            <span className="flex-1" />
            <Items list="zoomBox zoomEq | zoomMinusBox zoomMinus | rodA rodB rodC" />
            <span className="w-[3px]" />
          </Bar>
        </div>
        <Bar><Items list="cubeTop cubeLeft cubeRight cubeWire" /></Bar>
        <Bar><Items list="cubeRed v" /></Bar>
        <Bar><Items list="globe v sphere v solidRed wireRed" /></Bar>
        <Bar><Items list="pencil pencils v | grayPen V" /></Bar>
        <Bar><Items list="lineQ tables | puzzle hammer sigma post v" /><span className="w-1" /></Bar>
      </div>
      <div className="flex h-[30px] shrink-0">
        <div className="w-[358px] shrink-0 [&>div]:w-full">
          <Bar>
            <Items list="plus v line" />
            <span className="flex-1" />
            <Items list="wrench star v" />
          </Bar>
        </div>
        <Bar><Items list="xf1 xf2 xf3 xf4 xf5 xf6 xf7 | fillet v four stretch v" /></Bar>
        <Bar><Items list="bulb v diag" /></Bar>
        <Bar><Items list="gridRed linesRed arc pipe boxUp v | swirl burst grid3d | net1 v net2 v mill v" /></Bar>
      </div>
      <div className="flex h-[31px] shrink-0 border-b border-[#8f959f]">
        <div className="flex shrink-0 items-center border-r border-[#8f959f] bg-[#ffffcc] pr-[10px] pl-[6px] font-['Liberation_Sans',Arial,sans-serif]">
          <button aria-label="X" className={"mr-[6px] flex size-5 items-center justify-center " + flat}><Icon k="axisX" s={16} /></button>
          <input aria-label="X coordinate" defaultValue="-166.88" className="h-[21px] w-[90px] border border-[#b0b0b0] bg-white pl-[2px] text-[11px]" />
          <div className="ml-[120px] flex h-[21px] w-[84px] items-center justify-end border border-[#c4c4c4] bg-white pr-[5px]"><Tri gray /></div>
          <div className="ml-2 flex items-center gap-1">
            <Sel k="gBolt" />
            <Sel k="gBang" />
            <span className="flex h-5 w-[22px] items-center justify-center"><Icon k="gCastle" s={20} /></span>
            <span className="-ml-1 flex h-5 w-[13px] items-center justify-center border border-[#ccc] bg-[#f2f2e8]"><Tri gray /></span>
            <button aria-label="Help" className={"flex size-[21px] items-center justify-center " + raised}><Icon k="quest" /></button>
          </div>
          <span className="ml-2 h-7 w-[6px] border-x border-[#c4c4b0]" />
          <button className={"ml-[8px] h-[21px] w-[46px] text-[#9a9a9a] " + flat}>All...</button>
          <button className={"mr-2 ml-[9px] h-[21px] w-[46px] " + flat}>Only...</button>
          <Sel k="gCubes" />
          <div className="mr-[9px] ml-2 flex h-[21px] w-[73px] items-center border border-[#b4b4b4] bg-[#f6f6f6] pr-[5px]">
            <select aria-label="Selection mode" className="flex-1 appearance-none px-[3px]">
              <option>In</option>
            </select>
            <Tri gray />
          </div>
          <span className="mr-1 flex h-5 w-[37px] items-center gap-2 bg-[#f8f8e0] text-[#999]">
            <Icon k="gDots" s={20} />-
          </span>
          <div className="flex gap-1"><Sel k="gCursor" /><Sel k="gHexMark" /></div>
          <div className="ml-[9px] flex gap-1"><Sel k="gHex" /><Sel k="gHex" /><Sel k="gHex" /></div>
          <div className="ml-[10px] flex gap-1"><Sel k="gCube" /><Sel k="gChev" /></div>
          <div className="ml-[10px]"><Sel k="gCheck" /></div>
          <div className="ml-[10px] flex gap-1"><Sel k="gNo" /><Sel k="gCircle" /></div>
          <div className="ml-[10px]"><Sel k="gQ" /></div>
        </div>
      </div>
      <div className="flex h-[31px] shrink-0 items-center border-b border-[#8f959f] bg-[#ffffcc] pl-[2px]">
        <button aria-label="Solid" className={"flex size-[22px] items-center justify-center " + raised}><Icon k="darkCube" /></button>
        <span className="ml-1 h-7 w-px bg-[#c4c4b0]" />
        <span className="w-[918px]" />
        <button aria-label="Help" className={"flex size-[22px] items-center justify-center " + raised}><Icon k="quest" /></button>
      </div>
      <main className="flex min-h-0 flex-1">
        <div className="w-[45px] shrink-0">
          <div className="flex flex-col border-r border-b border-[#a4a9ba] bg-[#f0f0f2] pb-[3px]">
            <span className="mx-1 mt-1 mb-[6px] h-[3px] border-t-2 border-dotted border-[#b8bccb]" />
            <VItems list="bUp bRev bSweep bLoft bFillet+ | bShell bBool+ bDraft bTrim bCube | bOpen bGrid bFace bPlan | bFour+ bRed+" />
          </div>
        </div>
        <Manager />
        <div className="min-w-0 flex-1 bg-[#000099]">
          <Scene />
        </div>
        <div className="flex w-[31px] shrink-0 flex-col overflow-hidden bg-gradient-to-r from-[#f0f0f2] via-[#f0f0f2] via-75% to-[#dfe6f4]">
          <span className="mx-1 mt-1 mb-[5px] h-[3px] shrink-0 border-t-2 border-dotted border-[#b8bccb]" />
          <div className="shrink-0"><VItems list="save cubeRight cubeLeft cap line grid4 cubeWire cubeTop fit bCube" /></div>
          <span className="mt-1 h-px shrink-0 bg-[#a0a4b0]" />
          <span className="mx-1 mt-[3px] mb-[3px] h-[3px] shrink-0 border-t-2 border-dotted border-[#b8bccb]" />
          <div className="flex shrink-0 flex-col"><VItems list="gSel gPlus gLine gCirc gCorner gSq gBlob gGlobe gNo | gBoxes gBoxes | gBlock gBlock" /></div>
        </div>
      </main>
      <footer className="flex h-[28px] shrink-0 items-center justify-end overflow-hidden border-t border-[#b8b8c0] bg-[#f0eeee]">
        <button className={"w-[23px] " + sbtn}>3D</button>
        <button className={"ml-[5px] w-[46px] " + sbtn}>Gview</button>
        <button className={"ml-[5px] w-[38px] " + sbtn}>Planes</button>
        <label htmlFor="z" className="ml-[5px] w-3">Z</label>
        <div className="flex h-[21px] w-[84px] shrink-0 items-center bg-white">
          <input id="z" defaultValue="0.0" className="mr-[7px] h-[19px] w-16 bg-[#ffff80] pl-[5px]" />
          <Tri />
        </div>
        <input aria-label="Color" defaultValue="21" className="ml-1 h-[19px] w-[33px] shrink-0 bg-[#c8ffff] text-center" />
        <button aria-label="Pick color" className="flex h-[19px] w-[15px] shrink-0 items-center justify-center border border-[#b0b0b0] bg-[#f4f4f4]">
          <svg viewBox="0 0 10 10" width="10" height="10"><path d="M0 0h10L5 10Z" fill="#000" /></svg>
        </button>
        <label htmlFor="level" className={"ml-[5px] w-[31px] " + sbtn}>Level</label>
        <div className="mr-[5px] ml-[3px] flex h-[21px] w-[100px] shrink-0 items-center bg-white">
          <select id="level" className="w-[86px] appearance-none overflow-hidden px-1 whitespace-nowrap">
            <option>2 : Les esquisses</option>
          </select>
          <Tri />
        </div>
        <button className={"w-[60px] " + sbtn}>Attributes</button>
        <button aria-label="Point style" className="mx-1 flex h-[21px] w-[38px] shrink-0 items-center justify-between bg-white px-1">
          <svg viewBox="0 0 10 10" width="10" height="10"><path d="M5 0v10M0 5h10M1 9l8-8" stroke="#111" strokeWidth="1.100" /></svg>
          <Tri />
        </button>
        <LinePick label="Line width" w="w-[63px]" h="h-[3px]" />
        <span className="w-[4px] shrink-0" />
        <LinePick label="Line style" w="w-[68px]" h="h-px" />
        <button className={"ml-[5px] w-[40px] " + sbtn}>WCS</button>
        <button className={"ml-[5px] w-[52px] " + sbtn}>Groups</button>
        <button className={"ml-[6px] w-[12px] " + sbtn}>!</button>
        <button className="ml-[6px] h-5 w-2 shrink-0 rounded-l-[3px] border border-r-0 border-[#b0b0b0] bg-[#f2f2f2]">?</button>
      </footer>
      <div className="flex h-[7px] shrink-0 items-end overflow-hidden border-t border-[#15446f] bg-gradient-to-r from-[#1272ac] via-[#2a7fc8] via-60% to-[#123f6c]">
        <span className="ml-[14px] h-1 w-6 rounded-t-full bg-[#bcdcea]" />
        <span className="ml-[50px] h-[2px] w-4 rounded-t-full bg-[#c0b060]" />
        <span className="ml-8 h-[2px] w-5 rounded-t-full bg-[#c0b060]" />
        <span className="ml-[90px] flex h-full w-[59px] justify-center bg-[#e4eef6]">
          <span className="mt-[2px] h-2 w-5 rounded-t-full border-2 border-b-0 border-[#c83c48]" />
        </span>
        <span className="ml-5 h-[3px] w-6 border border-b-0 border-[#cfe4f2]" />
        <span className="ml-5 flex h-full w-[59px] items-end justify-center bg-[#b9d8ec]">
          <span className="h-1 w-7 bg-[#f0dc70]" />
        </span>
        <span className="ml-7 h-[2px] w-3 rounded-t-full bg-[#c84848]" />
        <span className="ml-[44px] h-1 w-6 rounded-t-full bg-[#c84848]" />
        <span className="ml-[18px] flex h-full w-[59px] items-end justify-center bg-[#cfe6f4] pl-4">
          <span className="h-1 w-4 bg-[#a02c2c]" />
        </span>
      </div>
      <Verify />
    </div>
  );
}
